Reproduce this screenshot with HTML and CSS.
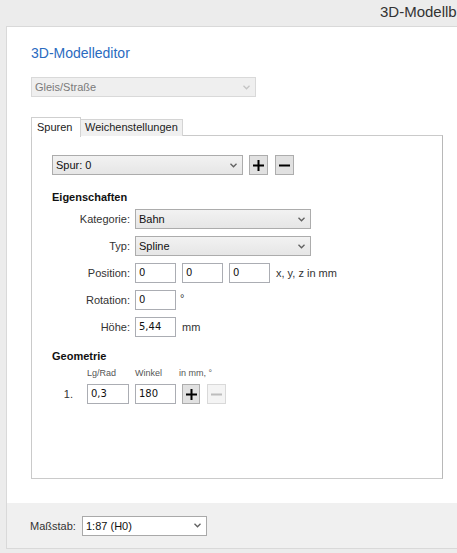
FILE: index.html
```html
<!DOCTYPE html>
<html lang="de">
<head>
    <meta charset="UTF-8">
    <title>3D-Modelleditor</title>
    <link rel="stylesheet" href="styles.css">
</head>
<body>
    <div class="topbar">
        <span class="apptitle">3D-Modellbahn Studio</span>
    </div>

    <div class="window">
        <div class="content">
            <h1 class="heading">3D-Modelleditor</h1>

            <!-- Objektart (gesperrt) -->
            <div class="combo combo-disabled combo-type">
                <span>Gleis/Straße</span>
                <svg class="chev" width="7" height="5" viewBox="0 0 7 5"><polyline points="0.5,0.8 3.5,3.8 6.5,0.8" fill="none" stroke="currentColor" stroke-width="1.3"/></svg>
            </div>

            <div class="tabs">
                <div class="tab tab-active">Spuren</div>
                <div class="tab">Weichenstellungen</div>
            </div>

            <div class="tabpanel">
                <div class="spur-row">
                    <div class="combo combo-spur">
                        <span>Spur: 0</span>
                        <svg class="chev" width="7" height="5" viewBox="0 0 7 5"><polyline points="0.5,0.8 3.5,3.8 6.5,0.8" fill="none" stroke="currentColor" stroke-width="1.3"/></svg>
                    </div>
                    <button class="btn">
                        <svg width="11" height="11" viewBox="0 0 11 11"><path d="M5.5 0v11M0 5.5h11" stroke="#000" stroke-width="2"/></svg>
                    </button>
                    <button class="btn">
                        <svg width="11" height="11" viewBox="0 0 11 11"><path d="M0 5.5h11" stroke="#000" stroke-width="2"/></svg>
                    </button>
                </div>

                <div class="section">Eigenschaften</div>
                <div class="form">
                    <div class="label">Kategorie:</div>
                    <div class="combo combo-field">
                        <span>Bahn</span>
                        <svg class="chev" width="7" height="5" viewBox="0 0 7 5"><polyline points="0.5,0.8 3.5,3.8 6.5,0.8" fill="none" stroke="currentColor" stroke-width="1.3"/></svg>
                    </div>

                    <div class="label">Typ:</div>
                    <div class="combo combo-field">
                        <span>Spline</span>
                        <svg class="chev" width="7" height="5" viewBox="0 0 7 5"><polyline points="0.5,0.8 3.5,3.8 6.5,0.8" fill="none" stroke="currentColor" stroke-width="1.3"/></svg>
                    </div>

                    <div class="label">Position:</div>
                    <div class="fields">
                        <div class="edit">0</div>
                        <div class="edit">0</div>
                        <div class="edit">0</div>
                        <span class="unit">x, y, z in mm</span>
                    </div>

                    <div class="label">Rotation:</div>
                    <div class="fields">
                        <div class="edit">0</div>
                        <span class="unit unit-deg">°</span>
                    </div>

                    <div class="label">Höhe:</div>
                    <div class="fields">
                        <div class="edit">5,44</div>
                        <span class="unit">mm</span>
                    </div>
                </div>

                <div class="section section-geo">Geometrie</div>
                <div class="geo geo-head">
                    <span></span>
                    <span>Lg/Rad</span>
                    <span>Winkel</span>
                    <span>in mm, °</span>
                </div>
                <div class="geo">
                    <span class="geo-num">1.</span>
                    <div class="edit edit-geo">0,3</div>
                    <div class="edit">180</div>
                    <div class="geo-btns">
                        <button class="btn btn-small">
                            <svg width="11" height="11" viewBox="0 0 11 11"><path d="M5.5 0v11M0 5.5h11" stroke="#000" stroke-width="2"/></svg>
                        </button>
                        <button class="btn btn-small btn-disabled">
                            <svg width="11" height="11" viewBox="0 0 11 11"><path d="M0 5.5h11" stroke="#bdbdbd" stroke-width="2"/></svg>
                        </button>
                    </div>
                </div>
            </div>
        </div>

        <div class="footer">
            <span class="footer-label">Maßstab:</span>
            <div class="combo combo-scale">
                <span>1:87 (H0)</span>
                <svg class="chev" width="7" height="5" viewBox="0 0 7 5"><polyline points="0.5,0.8 3.5,3.8 6.5,0.8" fill="none" stroke="currentColor" stroke-width="1.3"/></svg>
            </div>
        </div>
    </div>
</body>
</html>
```

FILE: styles.css
```css
body {
    margin: 0;
    background-color: #ececec;
    font-family: "Liberation Sans", Arial, sans-serif;
    font-size: 11px;
    color: #222;
    overflow: hidden;
    height: 553px;
}
.topbar {
    height: 26px;
    padding-left: 380px;
    white-space: nowrap;
    overflow: hidden;
}
.apptitle {
    font-size: 15px;
    line-height: 24px;
    color: #333;
}
/* Main window */
.window {
    margin-left: 6px;
    border: 1px solid #d9d9d9;
    border-right: none;
    background-color: #fff;
}
.content {
    padding: 16px 24px 24px 24px;
}
.heading {
    margin: 0;
    font-size: 14px;
    font-weight: normal;
    line-height: 20px;
    color: #2a6bbf;
}
/* Comboboxes */
.combo {
    box-sizing: border-box;
    height: 20px;
    display: flex;
    align-items: center;
    justify-content: space-between;
    padding: 0 5px 0 3px;
    border: 1px solid #acacac;
    background: linear-gradient(#f2f2f2, #e6e6e6);
    color: #111;
}
.chev {
    color: #606060;
}
.combo-disabled {
    border-color: #d9d9d9;
    background: #efefef;
    color: #7a7a7a;
}
.combo-disabled .chev {
    color: #c4c4c4;
}
.combo-type {
    width: 225px;
    margin-top: 14px;
}
.combo-spur {
    width: 191px;
}
.combo-field {
    width: 176px;
}
.combo-scale {
    width: 125px;
    background: #fff;
    border-color: #a9a9a9;
}
/* Tabs */
.tabs {
    display: flex;
    align-items: flex-end;
    margin-top: 20px;
    height: 19px;
    position: relative;
    z-index: 1;
}
.tab {
    box-sizing: border-box;
    height: 17px;
    padding: 0 4px;
    line-height: 15px;
    border: 1px solid #d4d4d4;
    border-bottom: none;
    background-color: #f0f0f0;
    margin-left: -1px;
}
.tab-active {
    height: 20px;
    width: 50px;
    margin-left: 0;
    margin-bottom: -1px;
    padding: 0 5px;
    line-height: 18px;
    background-color: #fff;
    border-color: #cfcfcf;
}
.tabpanel {
    box-sizing: border-box;
    width: 412px;
    height: 344px;
    margin-top: -1px;
    border: 1px solid #cacaca;
    border-right-color: #b8b8b8;
    padding: 19px 20px;
}
.spur-row {
    display: flex;
    align-items: center;
}
.btn {
    box-sizing: border-box;
    width: 19px;
    height: 20px;
    margin-left: 6px;
    padding: 0;
    display: flex;
    align-items: center;
    justify-content: center;
    border: 1px solid #adadad;
    background-color: #e1e1e1;
}
.btn + .btn {
    margin-left: 7px;
}
.btn-small {
    width: 18px;
}
.btn-disabled {
    width: 19px;
    border-color: #d9d9d9;
    background-color: #f4f4f4;
}
/* Sections */
.section {
    margin-top: 14px;
    margin-bottom: 4px;
    font-weight: bold;
    line-height: 16px;
    color: #111;
}
.section-geo {
    margin-top: 11px;
    margin-bottom: 3px;
}
.form {
    display: grid;
    grid-template-columns: 78px auto;
    column-gap: 5px;
    row-gap: 7px;
    align-items: center;
}
.label {
    text-align: right;
    color: #333;
}
.fields {
    display: flex;
    align-items: center;
    gap: 6px;
}
.edit {
    box-sizing: border-box;
    width: 41px;
    height: 20px;
    padding: 0 3px;
    border: 1px solid #abadb3;
    background-color: #fff;
    font-family: "DejaVu Sans", Verdana, sans-serif;
    font-size: 10px;
    line-height: 18px;
    color: #111;
}
.unit {
    color: #333;
}
.unit-deg {
    align-self: flex-start;
    margin-top: 2px;
    margin-left: -2px;
}
/* Geometrie table */
.geo {
    display: grid;
    grid-template-columns: 29px 42px 41px auto;
    column-gap: 6px;
    align-items: center;
}
.geo-head {
    font-size: 9px;
    line-height: 12px;
    color: #555;
    margin-bottom: 5px;
}
.geo-head span:last-child {
    margin-left: -3px;
}
.geo-num {
    text-align: right;
    padding-right: 8px;
    color: #333;
}
.edit-geo {
    width: 42px;
}
.geo-btns {
    display: flex;
}
.geo-btns .btn {
    margin-left: 0;
}
.geo-btns .btn + .btn {
    margin-left: 7px;
}
/* Footer */
.footer {
    display: flex;
    align-items: center;
    height: 45px;
    padding-left: 23px;
    background-color: #f0f0f0;
}
.footer-label {
    width: 52px;
    color: #333;
}
```
